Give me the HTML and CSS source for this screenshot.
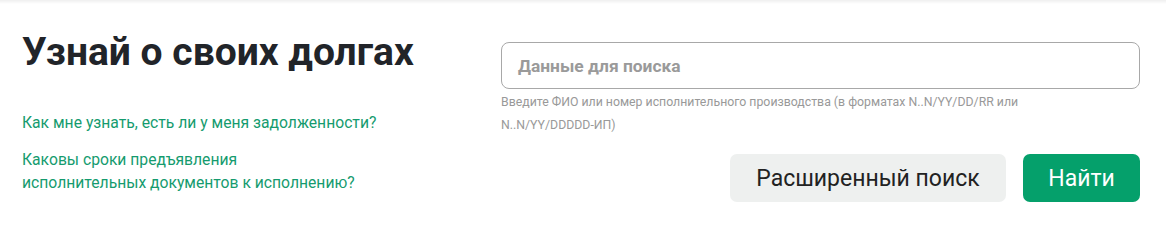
FILE: index.html
```html
<!DOCTYPE html>
<html lang="ru">
<head>
<meta charset="utf-8">
<link rel="stylesheet" href="styles.css">
</head>
<body>
<div class="topshade"></div>
<section class="debts">
  <div class="left">
    <h1 class="title">Узнай о своих долгах</h1>
    <ul class="faq">
      <li><a href="#">Как мне узнать, есть ли у меня задолженности?</a></li>
      <li><a href="#">Каковы сроки предъявления<br>исполнительных документов к исполнению?</a></li>
    </ul>
  </div>
  <div class="right">
    <div class="field">Данные для поиска</div>
    <p class="hint">Введите ФИО или номер исполнительного производства (в форматах N..N/YY/DD/RR или N..N/YY/DDDDD-ИП)</p>
    <div class="actions">
      <button class="btn btn-light">Расширенный поиск</button>
      <button class="btn btn-green">Найти</button>
    </div>
  </div>
</section>
</body>
</html>
```
FILE: styles.css
```css
html, body { margin: 0; padding: 0; background: #fff; }
body { font-family: Roboto, "Liberation Sans", sans-serif; color: #222; width: 1166px; height: 227px; overflow: hidden; }
.topshade { height: 4px; background: linear-gradient(#efefef, #fff); }
.debts { display: grid; grid-template-columns: 479px 639px; padding: 0 26px 0 22px; }
.title { margin: 24px 0 0; font-size: 39px; font-weight: 700; line-height: 48px; color: #212429; }
.faq { list-style: none; margin: 35px 0 0; padding: 0; }
.faq li { font-size: 15.7px; line-height: 23px; margin-bottom: 14px; }
.faq a { color: #159b6e; text-decoration: none; }
.right { padding-top: 38px; }
.field { box-sizing: border-box; height: 47px; border: 1px solid #a8a8a8; border-radius: 8px; padding: 0 16px; display: flex; align-items: center; font-family: Roboto, sans-serif; font-weight: 700; font-size: 17.4px; color: #9a9a9a; }
.hint { margin: 2px 0 0; font-family: Roboto, sans-serif; font-size: 12.3px; line-height: 23px; color: #999; width: 560px; }
.actions { display: flex; justify-content: flex-end; gap: 17px; margin-top: 17px; }
.btn { height: 48px; border: 0; border-radius: 7px; font-family: Roboto, sans-serif; font-size: 23px; padding: 0; }
.btn-light { background: #eef0ef; color: #222; width: 276px; }
.btn-green { background: #05a06b; color: #fff; width: 117px; }
```
